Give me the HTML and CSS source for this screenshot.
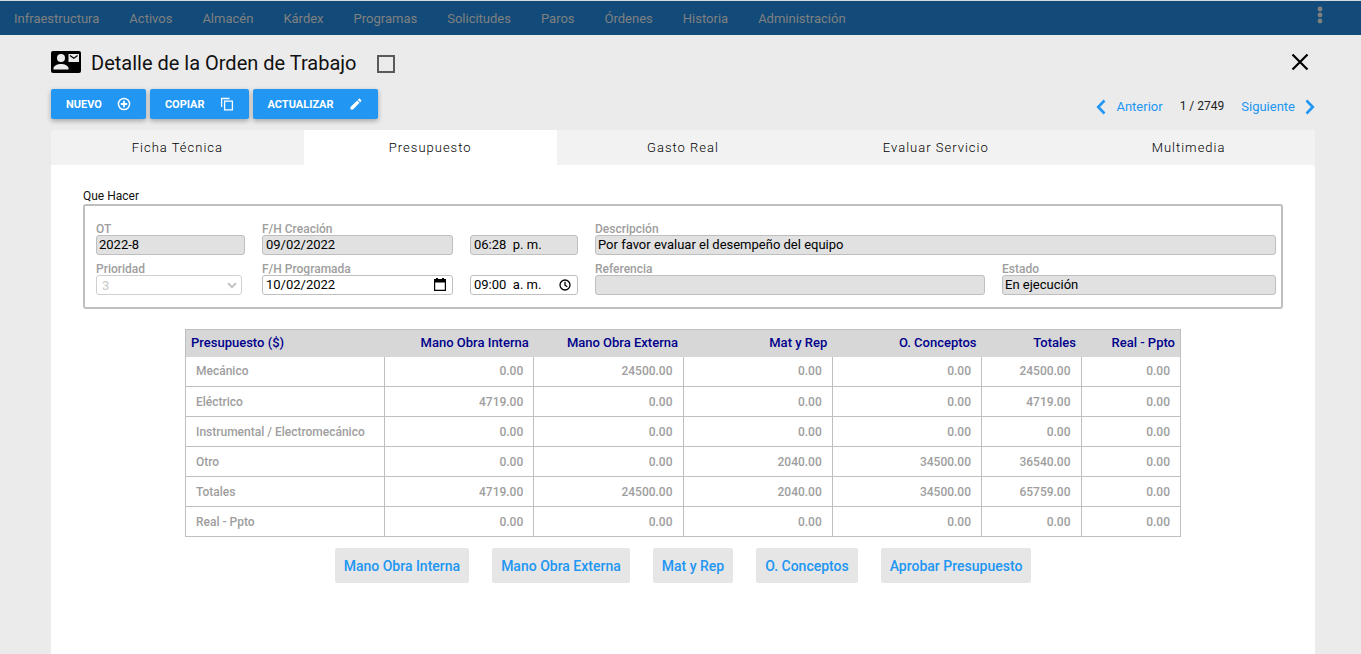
FILE: index.html
```html
<!DOCTYPE html>
<html lang="es">
<head>
<meta charset="utf-8">
<title>Detalle de la Orden de Trabajo</title>
<link rel="stylesheet" href="styles.css">
</head>
<body>
<nav class="navbar">
  <a href="#">Infraestructura</a>
  <a href="#">Activos</a>
  <a href="#">Almacén</a>
  <a href="#">Kárdex</a>
  <a href="#">Programas</a>
  <a href="#">Solicitudes</a>
  <a href="#">Paros</a>
  <a href="#">Órdenes</a>
  <a href="#">Historia</a>
  <a href="#">Administración</a>
  <button class="menu-btn" type="button" aria-label="Más opciones">
    <svg width="6" height="18" viewBox="0 0 6 18" fill="currentColor"><circle cx="3" cy="3" r="2.4"/><circle cx="3" cy="9" r="2.4"/><circle cx="3" cy="15" r="2.4"/></svg>
  </button>
</nav>

<main class="page">
  <header class="title-row">
    <svg class="card-icon" width="30" height="24" viewBox="0 0 30 24">
      <rect y="1" width="30" height="22" rx="2" fill="#000"/>
      <circle cx="10" cy="8" r="4" fill="#ececec"/>
      <path d="M2.500 19.500v-1.300c0-2.700 4.700-4.200 7.500-4.200s7.500 1.500 7.500 4.200v1.300z" fill="#ececec"/>
      <path d="M17.500 4h10.500v8H17.500z" fill="#ececec"/>
      <path d="M19 5.500 22.800 8.300l3.800-2.800" fill="none" stroke="#000" stroke-width="1.100"/>
    </svg>
    <h1>Detalle de la Orden de Trabajo</h1>
    <input class="title-check" type="checkbox" aria-label="Seleccionar orden">
    <button class="close-btn" type="button" aria-label="Cerrar">
      <svg width="18" height="18" viewBox="0 0 18 18" fill="none" stroke="#000" stroke-width="2.200"><path d="M1.500 1.500l15 15M16.500 1.500l-15 15"/></svg>
    </button>
  </header>

  <div class="toolbar">
    <div class="actions">
      <button class="action" type="button">NUEVO
        <svg width="14" height="14" viewBox="0 0 14 14" fill="none" stroke="currentColor" stroke-width="1.500"><circle cx="7" cy="7" r="5.600"/><path d="M7 3.800v6.400M3.800 7h6.400" stroke-width="1.800"/></svg>
      </button>
      <button class="action" type="button">COPIAR
        <svg width="14" height="14" viewBox="0 0 14 14" fill="none" stroke="currentColor" stroke-width="1.300"><path d="M1.600 10V1.500h7.900"/><path d="M4.600 4.100h7.800v8.800H4.600z"/></svg>
      </button>
      <button class="action" type="button">ACTUALIZAR
        <svg width="14" height="14" viewBox="0 0 14 14" fill="currentColor"><path d="M1.500 10.100v2.400h2.400l6.700-6.700-2.400-2.400zM12.300 4.100a.6.6 0 0 0 0-.9l-1.500-1.500a.6.6 0 0 0-.9 0L8.800 2.800l2.400 2.400z"/></svg>
      </button>
    </div>
    <div class="pager">
      <a href="#"><svg width="10" height="16" viewBox="0 0 10 16" fill="none" stroke="currentColor" stroke-width="2.600"><path d="M8.500 1.500 2.200 8l6.300 6.500"/></svg>Anterior</a>
      <span>1 / 2749</span>
      <a href="#">Siguiente<svg width="10" height="16" viewBox="0 0 10 16" fill="none" stroke="currentColor" stroke-width="2.600"><path d="M1.500 1.500 7.800 8l-6.300 6.500"/></svg></a>
    </div>
  </div>

  <div class="tabs" role="tablist">
    <button class="tab" role="tab" type="button">Ficha Técnica</button>
    <button class="tab tab-active" role="tab" type="button" aria-selected="true">Presupuesto</button>
    <button class="tab" role="tab" type="button">Gasto Real</button>
    <button class="tab" role="tab" type="button">Evaluar Servicio</button>
    <button class="tab" role="tab" type="button">Multimedia</button>
  </div>

  <section class="panel">
    <h2 class="group-title">Que Hacer</h2>
    <div class="group">
      <div class="field">
        <label for="ot">OT</label>
        <input id="ot" type="text" value="2022-8" readonly>
      </div>
      <div class="field">
        <label for="fc">F/H Creación</label>
        <input id="fc" class="stamp" type="text" value="09/02/2022" readonly>
      </div>
      <div class="field">
        <input class="stamp" type="text" value="06:28  p. m." aria-label="Hora de creación" readonly>
      </div>
      <div class="field field-wide">
        <label for="desc">Descripción</label>
        <input id="desc" type="text" value="Por favor evaluar el desempeño del equipo" readonly>
      </div>
      <div class="field field-narrow">
        <label for="prio">Prioridad</label>
        <select id="prio" disabled><option>3</option></select>
        <svg class="field-icon chevron" width="10" height="7" viewBox="0 0 10 7" fill="none" stroke="currentColor" stroke-width="1.800"><path d="M1 1.200l4 4 4-4"/></svg>
      </div>
      <div class="field">
        <label for="fp">F/H Programada</label>
        <input id="fp" class="stamp" type="text" value="10/02/2022">
        <svg class="field-icon" width="12" height="14" viewBox="0 0 12 14"><path d="M2 0h2v1h4V0h2v1h2v12H0V1h2zM1.200 4.500v7.300h9.600V4.500z" fill="#000" fill-rule="evenodd"/></svg>
      </div>
      <div class="field">
        <input class="stamp" type="text" value="09:00  a. m." aria-label="Hora programada">
        <svg class="field-icon" width="12" height="14" viewBox="0 0 12 14" fill="none" stroke="#000" stroke-width="1.300"><circle cx="6" cy="7" r="5"/><path d="M6 3.800V7.200l2.300 1.500"/></svg>
      </div>
      <div class="field">
        <label for="ref">Referencia</label>
        <input id="ref" type="text" value="" readonly>
      </div>
      <div class="field">
        <label for="est">Estado</label>
        <input id="est" type="text" value="En ejecución" readonly>
      </div>
    </div>

    <table class="budget">
      <colgroup><col class="c-name"><col class="c-cost"><col class="c-cost"><col class="c-cost"><col class="c-cost"><col class="c-total"><col class="c-total"></colgroup>
      <thead>
        <tr><th>Presupuesto ($)</th><th>Mano Obra Interna</th><th>Mano Obra Externa</th><th>Mat y Rep</th><th>O. Conceptos</th><th>Totales</th><th>Real - Ppto</th></tr>
      </thead>
      <tbody>
        <tr><td>Mecánico</td><td>0.00</td><td>24500.00</td><td>0.00</td><td>0.00</td><td>24500.00</td><td>0.00</td></tr>
        <tr><td>Eléctrico</td><td>4719.00</td><td>0.00</td><td>0.00</td><td>0.00</td><td>4719.00</td><td>0.00</td></tr>
        <tr><td>Instrumental / Electromecánico</td><td>0.00</td><td>0.00</td><td>0.00</td><td>0.00</td><td>0.00</td><td>0.00</td></tr>
        <tr><td>Otro</td><td>0.00</td><td>0.00</td><td>2040.00</td><td>34500.00</td><td>36540.00</td><td>0.00</td></tr>
        <tr><td>Totales</td><td>4719.00</td><td>24500.00</td><td>2040.00</td><td>34500.00</td><td>65759.00</td><td>0.00</td></tr>
        <tr><td>Real - Ppto</td><td>0.00</td><td>0.00</td><td>0.00</td><td>0.00</td><td>0.00</td><td>0.00</td></tr>
      </tbody>
    </table>

    <div class="footer-actions">
      <button type="button">Mano Obra Interna</button>
      <button type="button">Mano Obra Externa</button>
      <button type="button">Mat y Rep</button>
      <button type="button">O. Conceptos</button>
      <button type="button">Aprobar Presupuesto</button>
    </div>
  </section>
</main>
</body>
</html>
```
FILE: styles.css
```css
* { box-sizing: border-box; }

body {
  margin: 0;
  min-height: 100vh;
  display: flex;
  flex-direction: column;
  background: #ebebeb;
  color: #222;
  font-family: Roboto, sans-serif;
  font-size: 13px;
}

button, input, select { font-family: inherit; margin: 0; }
button { border: 0; cursor: pointer; }
a { text-decoration: none; }
svg { display: block; flex: none; }

/* Top navigation */
.navbar {
  display: flex;
  align-items: center;
  gap: 30px;
  height: 35px;
  padding: 0 38px 0 14px;
  border-top: 1px solid #d3dade;
  background: #124b79;
}
.navbar a { color: #808080; font-weight: 400; line-height: 16px; padding-top: 2px; }
.menu-btn {
  margin-left: auto;
  margin-bottom: 6px;
  padding: 0;
  background: none;
  color: #808080;
}

.page {
  flex: 1;
  display: flex;
  flex-direction: column;
  padding: 0 46px 0 51px;
}

/* Title */
.title-row {
  display: flex;
  align-items: center;
  height: 54px;
}
.title-row h1 {
  margin: 0 21px 0 10px;
  padding-top: 2px;
  color: #111;
  font-size: 20px;
  font-weight: 400;
  line-height: 24px;
}
.title-check {
  appearance: none;
  width: 18px;
  height: 18px;
  margin-top: 3px;
  border: 2px solid #5a5a5a;
}
.close-btn {
  margin-left: auto;
  padding: 0 6px;
  background: none;
}

/* Toolbar */
.toolbar {
  display: flex;
  justify-content: space-between;
  height: 41px;
}
.actions { display: flex; gap: 4px; }
.action {
  display: flex;
  align-items: center;
  gap: 15px;
  height: 30px;
  padding: 0 15px;
  border-radius: 2px;
  background: #2196f3;
  box-shadow: 0 2px 5px rgba(0, 0, 0, .3);
  color: #fff;
  font-size: 11px;
  font-weight: 700;
}
.pager {
  display: flex;
  align-items: center;
  gap: 17px;
  height: 35px;
}
.pager span { font-size: 12px; padding-bottom: 2px; }
.pager a {
  display: flex;
  align-items: center;
  gap: 10px;
  color: #2196f3;
}

/* Tabs */
.tabs {
  display: grid;
  grid-template-columns: repeat(5, 1fr);
  background: #f2f2f2;
  border-radius: 3px 3px 0 0;
}
.tab {
  height: 35px;
  padding: 0;
  background: none;
  color: #000;
  font-size: 13px;
  font-weight: 300;
  letter-spacing: 1px;
}
.tab-active { background: #fff; }

/* Panel */
.panel {
  flex: 1;
  padding: 23px 32px;
  background: #fff;
  border-radius: 0 3px 0 0;
}
.group-title {
  margin: 0;
  color: #111;
  font-size: 12px;
  font-weight: 400;
  line-height: 16px;
}
.group {
  display: grid;
  grid-template-columns: 149fr 191fr 108fr 390fr 274fr;
  gap: 9px 17px;
  margin: 0 0 20px;
  padding: 18px 5px 12px 11px;
  border: 2px solid #bfbfbf;
  border-radius: 3px;
}
.field {
  position: relative;
  display: flex;
  flex-direction: column;
  justify-content: flex-end;
  min-width: 0;
}
.field-wide { grid-column: span 2; }
.field-narrow { margin-right: 3px; }
.field label {
  color: #9e9e9e;
  font-size: 12px;
  font-weight: 500;
  line-height: 11px;
}
.field input, .field select {
  appearance: none;
  width: 100%;
  height: 20px;
  padding: 0 2px 2px;
  border: 1px solid #bfbfbf;
  border-radius: 3px;
  background: #fff;
  color: #000;
  font-size: 13px;
}
.field input[readonly] { background: #e1e1e1; }
.field .stamp { padding-left: 3px; white-space: pre; }
.field select {
  padding: 0 5px;
  border-color: #d0d0d0;
  color: #c8c8c8;
  opacity: 1;
}
.field-icon {
  position: absolute;
  right: 7px;
  bottom: 3px;
}
.chevron { right: 5px; bottom: 6px; color: #bfbfbf; }

/* Budget table */
.budget {
  width: 83%;
  margin: 0 auto 11px;
  table-layout: fixed;
  border-collapse: collapse;
  border: 1px solid #bfbfbf;
}
.c-name { width: 20%; }
.c-cost { width: 15%; }
.c-total { width: 10%; }
.budget th {
  height: 27px;
  padding: 0 5px 1px;
  background: #d7d7d7;
  color: #00008b;
  font-size: 13px;
  font-weight: 500;
  text-align: right;
}
.budget td {
  height: 30px;
  padding: 0 10px;
  border: 1px solid #bfbfbf;
  color: #9e9e9e;
  font-size: 12px;
  font-weight: 500;
  text-align: right;
}
.budget thead + tbody tr:first-child td { border-top: 0; }
.budget th:first-child, .budget td:first-child { text-align: left; }

.footer-actions {
  display: flex;
  justify-content: center;
  gap: 23px;
}
.footer-actions button {
  height: 35px;
  padding: 0 9px;
  border-radius: 2px;
  background: #e6e6e6;
  color: #2196f3;
  font-size: 14px;
  font-weight: 500;
}
```
